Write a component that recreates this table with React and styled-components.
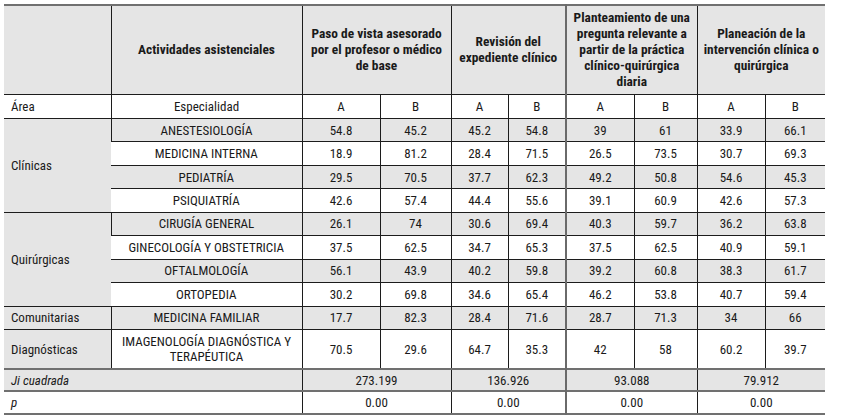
import React from "react";
import styled, { createGlobalStyle } from "styled-components";

const Global = createGlobalStyle`
  html, body { margin: 0; padding: 0; background: #fff; }
  body { font-family: Roboto, "Liberation Sans", sans-serif; font-stretch: 75%; color: #1a1a1a; }
`;

const Page = styled.div`
  padding: 4px 0 0 4px;
  width: 821px;
`;

const Table = styled.table`
  border-collapse: collapse;
  table-layout: fixed;
  width: 821px;
  font-size: 13px;
  font-stretch: 75%;
  border-top: 2px solid #707070;
  border-bottom: 2px solid #707070;
`;

const HeadCell = styled.th`
  background: #e5e5e5;
  font-weight: bold;
  font-size: 13.4px;
  line-height: 16px;
  text-align: center;
  vertical-align: middle;
  padding: 0 2px;
  height: 88px;
  border-left: ${(p) => (p.$thick ? "2px solid #6a6a6a" : "1px solid #1c1c1c")};
  &:first-child { border-left: none; }
  border-bottom: 1px solid #1c1c1c;
`;

const Row = styled.tr`
  height: ${(p) => p.$h || 23.45}px;
  background: ${(p) => (p.$gray ? "#e5e5e5" : "#fff")};
  border-bottom: ${(p) => (p.$thickBottom ? "2px solid #707070" : "1px solid #1c1c1c")};
`;

const Cell = styled.td`
  text-align: ${(p) => (p.$left ? "left" : "center")};
  vertical-align: middle;
  padding: ${(p) => (p.$left ? "0 0 0 7px" : "0 2px")};
  line-height: 15px;
  font-style: ${(p) => (p.$italic ? "italic" : "normal")};
  background: ${(p) => (p.$gray ? "#e5e5e5" : "transparent")};
  border-left: ${(p) => (p.$thick ? "2px solid #6a6a6a" : "1px solid #1c1c1c")};
  &:first-child { border-left: none; }
`;

const cols = [107, 191, 78, 71, 57, 58, 68, 63, 68, 60];

const groups = [
  {
    area: "Clínicas",
    rows: [
      ["ANESTESIOLOGÍA", "54.8", "45.2", "45.2", "54.8", "39", "61", "33.9", "66.1"],
      ["MEDICINA INTERNA", "18.9", "81.2", "28.4", "71.5", "26.5", "73.5", "30.7", "69.3"],
      ["PEDIATRÍA", "29.5", "70.5", "37.7", "62.3", "49.2", "50.8", "54.6", "45.3"],
      ["PSIQUIATRÍA", "42.6", "57.4", "44.4", "55.6", "39.1", "60.9", "42.6", "57.3"],
    ],
  },
  {
    area: "Quirúrgicas",
    rows: [
      ["CIRUGÍA GENERAL", "26.1", "74", "30.6", "69.4", "40.3", "59.7", "36.2", "63.8"],
      ["GINECOLOGÍA Y OBSTETRICIA", "37.5", "62.5", "34.7", "65.3", "37.5", "62.5", "40.9", "59.1"],
      ["OFTALMOLOGÍA", "56.1", "43.9", "40.2", "59.8", "39.2", "60.8", "38.3", "61.7"],
      ["ORTOPEDIA", "30.2", "69.8", "34.6", "65.4", "46.2", "53.8", "40.7", "59.4"],
    ],
  },
  {
    area: "Comunitarias",
    rows: [["MEDICINA FAMILIAR", "17.7", "82.3", "28.4", "71.6", "28.7", "71.3", "34", "66"]],
  },
  {
    area: "Diagnósticas",
    tall: true,
    rows: [["IMAGENOLOGÍA DIAGNÓSTICA Y TERAPÉUTICA", "70.5", "29.6", "64.7", "35.3", "42", "58", "60.2", "39.7"]],
  },
];

const ji = ["273.199", "136.926", "93.088", "79.912"];

export default function App() {
  let idx = 0;
  return (
    <Page>
      <Global />
      <Table>
        <colgroup>
          {cols.map((w, i) => (
            <col key={i} style={{ width: w }} />
          ))}
        </colgroup>
        <thead>
          <tr>
            <HeadCell />
            <HeadCell>Actividades asistenciales</HeadCell>
            <HeadCell colSpan={2}>
              Paso de vista asesorado
              <br />
              por el profesor o médico
              <br />
              de base
            </HeadCell>
            <HeadCell colSpan={2}>
              Revisión del
              <br />
              expediente clínico
            </HeadCell>
            <HeadCell colSpan={2} $thick>
              Planteamiento de una
              <br />
              pregunta relevante a
              <br />
              partir de la práctica
              <br />
              clínico-quirúrgica
              <br />
              diaria
            </HeadCell>
            <HeadCell colSpan={2}>
              Planeación de la
              <br />
              intervención clínica o
              <br />
              quirúrgica
            </HeadCell>
          </tr>
        </thead>
        <tbody>
          <Row $h={24}>
            <Cell $left>Área</Cell>
            <Cell>Especialidad</Cell>
            <Cell>A</Cell>
            <Cell>B</Cell>
            <Cell>A</Cell>
            <Cell>B</Cell>
            <Cell $thick>A</Cell>
            <Cell>B</Cell>
            <Cell>A</Cell>
            <Cell>B</Cell>
          </Row>
          {groups.map((g) =>
            g.rows.map((r, ri) => {
              const gray = idx % 2 === 0;
              idx += 1;
              return (
                <Row
                  key={r[0]}
                  $gray={gray}
                  $h={g.tall ? 40 : 23.45}
                  $thickBottom={g.tall}
                >
                  {ri === 0 && (
                    <Cell $left $gray rowSpan={g.rows.length}>
                      {g.area}
                    </Cell>
                  )}
                  <Cell>
                    {g.tall ? (
                      <>
                        IMAGENOLOGÍA DIAGNÓSTICA Y
                        <br />
                        TERAPÉUTICA
                      </>
                    ) : (
                      r[0]
                    )}
                  </Cell>
                  {r.slice(1).map((v, vi) => (
                    <Cell key={vi} $thick={vi === 4}>
                      {v}
                    </Cell>
                  ))}
                </Row>
              );
            })
          )}
          <Row $gray $h={22} $thickBottom>
            <Cell $left $italic colSpan={2}>
              Ji cuadrada
            </Cell>
            {ji.map((v, i) => (
              <Cell key={i} colSpan={2} $thick={i === 2}>
                {v}
              </Cell>
            ))}
          </Row>
          <Row $h={23}>
            <Cell $left $italic colSpan={2}>
              p
            </Cell>
            {ji.map((v, i) => (
              <Cell key={i} colSpan={2} $thick={i === 2}>
                0.00
              </Cell>
            ))}
          </Row>
        </tbody>
      </Table>
    </Page>
  );
}
